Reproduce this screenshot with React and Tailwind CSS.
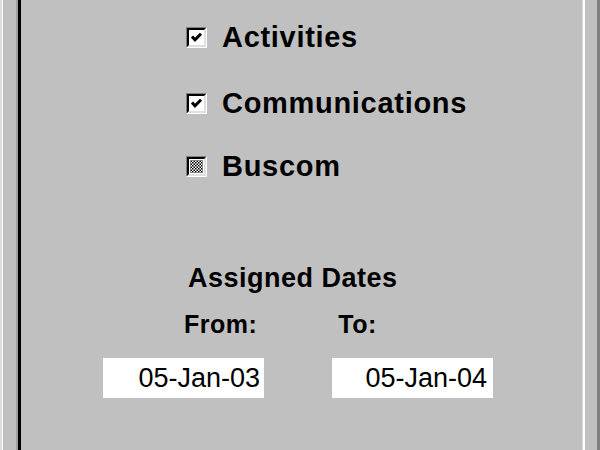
import React from "react";

function Box({ children }) {
  return (
    <div className="w-[21px] h-[21px] shrink-0 border-t border-l border-[#808080] border-b border-r border-b-white border-r-white">
      <div className="w-full h-full border-t-2 border-l-2 border-black border-b-2 border-r-2 border-b-[#dfdfdf] border-r-[#dfdfdf] bg-white">
        {children}
      </div>
    </div>
  );
}

function Check() {
  return (
    <svg width="15" height="15" viewBox="0 0 15 15" className="block">
      <path d="M3 6.5 L6 9.8 L12 3.8" fill="none" stroke="#000" strokeWidth="3" strokeLinecap="butt" strokeLinejoin="miter" />
    </svg>
  );
}

function Checker() {
  return (
    <svg width="15" height="15" viewBox="0 0 15 15" className="block">
      <defs>
        <pattern id="chk" width="3" height="3" patternUnits="userSpaceOnUse">
          <rect width="3" height="3" fill="#fff" />
          <rect width="1.5" height="1.5" fill="#000" />
          <rect x="1.5" y="1.5" width="1.5" height="1.5" fill="#000" />
        </pattern>
      </defs>
      <rect x="1" y="1" width="13" height="13" fill="url(#chk)" />
    </svg>
  );
}

function Row({ className, box, label }) {
  return (
    <div className={"flex items-center h-[32px] " + className}>
      <Box>{box}</Box>
      <span className="ml-[15px] text-[29px] leading-[32px] font-bold tracking-[0.7px] text-black">{label}</span>
    </div>
  );
}

export default function App() {
  return (
    <div
      className="w-[600px] h-[450px] flex bg-[#c0c0c0] overflow-hidden"
      style={{ fontFamily: '"Liberation Sans", Arial, sans-serif' }}
    >
      <div className="w-[2px] bg-[#dfdfdf]" />
      <div className="w-[1px] bg-white" />
      <div className="w-[13px] bg-[#c0c0c0]" />
      <div className="w-[2px] bg-[#a0a0a0]" />
      <div className="w-[3px] bg-black" />
      <div className="flex-1 flex flex-col">
        <div className="pl-[165px] pt-[21px] flex flex-col">
          <Row className="" box={<Check />} label="Activities" />
          <Row className="mt-[34px]" box={<Check />} label="Communications" />
          <Row className="mt-[31px]" box={<Checker />} label="Buscom" />
        </div>
        <div className="mt-[81px] pl-[167px] text-[27px] leading-[30px] font-bold tracking-[0.5px] text-black">
          Assigned Dates
        </div>
        <div className="mt-[17px] flex text-[25px] leading-[28px] font-bold tracking-[0.5px] text-black">
          <span className="ml-[163px]">From:</span>
          <span className="ml-[81px]">To:</span>
        </div>
        <div className="mt-[20px] pl-[82px] flex gap-[68px]">
          <div className="w-[161px] h-[40px] bg-white text-right pr-[4px] text-[27px] leading-[40px] text-black">05-Jan-03</div>
          <div className="w-[161px] h-[40px] bg-white text-right pr-[6px] text-[27px] leading-[40px] text-black">05-Jan-04</div>
        </div>
      </div>
      <div className="w-[1px] bg-[#dfdfdf]" />
      <div className="w-[2px] bg-white" />
      <div className="w-[12px] bg-[#c0c0c0]" />
      <div className="w-[3px] bg-[#808080]" />
    </div>
  );
}
